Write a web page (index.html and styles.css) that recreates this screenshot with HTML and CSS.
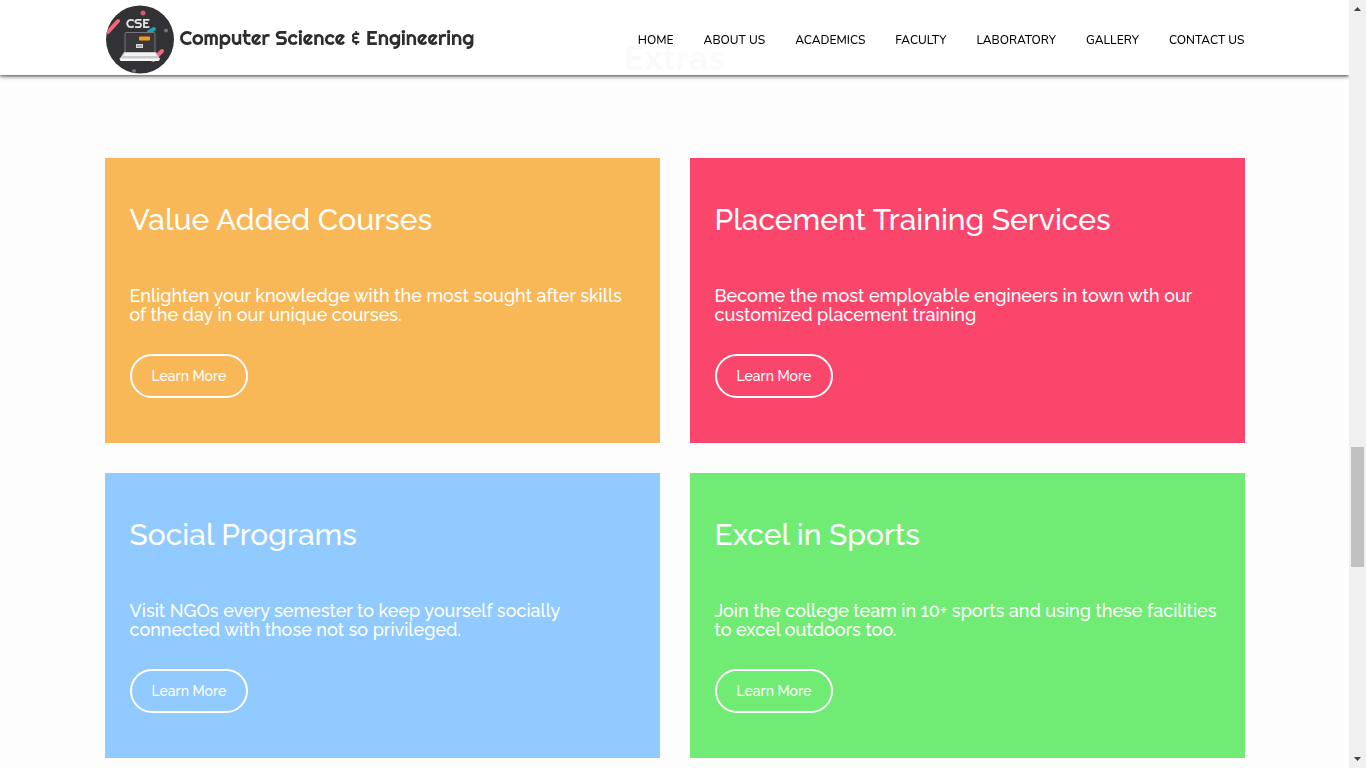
FILE: index.html
```html
<!DOCTYPE html>
<html lang="en">
<head>
<meta charset="utf-8">
<meta name="viewport" content="width=device-width, initial-scale=1">
<title>Computer Science &amp; Engineering</title>
<link rel="stylesheet" href="styles.css">
</head>
<body>
<header class="site-header">
  <div class="container header-row">
    <a class="brand" href="#">
      <svg class="logo" viewBox="0 0 69 69" aria-hidden="true">
        <defs><clipPath id="disc"><circle cx="35" cy="34.500" r="34"/></clipPath></defs>
        <g clip-path="url(#disc)">
          <rect width="69" height="69" fill="#313136"/>
          <path d="M3 27 L13 16" stroke="#f4667c" stroke-width="4" stroke-linecap="round"/>
          <path d="M48 55 L57 46" stroke="#f4667c" stroke-width="4" stroke-linecap="round"/>
          <circle cx="38" cy="8" r="2.500" fill="#d5596c"/>
          <circle cx="61" cy="25.500" r="2" fill="#74747a"/>
          <circle cx="29" cy="66" r="2" fill="#74747a"/>
          <path d="M44 27 L49 24" stroke="#18a5c4" stroke-width="4" stroke-linecap="round"/>
          <rect x="20" y="27.500" width="30" height="20" rx="1" fill="#38383b" stroke="#77777b"/>
          <rect x="34" y="31.500" width="11" height="4" rx="1" fill="#f39b16"/>
          <rect x="31.500" y="39.500" width="6" height="3" fill="#a4a8aa" stroke="#d5d8d9"/>
          <path d="M19 47 H51 L55 54 H14.500 Z" fill="#c9cacc"/>
          <path d="M20 48 H50 L52 51 H18 Z" fill="#f3f3f3"/>
          <path d="M14.500 53.500 H55 L54 56 H15.500 Z" fill="#f8f8f8"/>
        </g>
        <text class="logo-text" x="21" y="23">CSE</text>
      </svg>
      <span class="brand-name">Computer Science &amp; Engineering</span>
    </a>
    <nav class="nav" aria-label="Main">
      <a href="#">HOME</a>
      <a href="#">ABOUT US</a>
      <a href="#">ACADEMICS</a>
      <a href="#">FACULTY</a>
      <a href="#">LABORATORY</a>
      <a href="#">GALLERY</a>
      <a href="#">CONTACT US</a>
    </nav>
  </div>
</header>
<main class="container extras">
  <h2 class="section-title">Extras</h2>
  <div class="cards">
    <section class="card orange">
      <h3>Value Added Courses</h3>
      <p>Enlighten your knowledge with the most sought after skills of the day in our unique courses.</p>
      <a class="more" href="#">Learn More</a>
    </section>
    <section class="card red">
      <h3>Placement Training Services</h3>
      <p>Become the most employable engineers in town wth our customized placement training</p>
      <a class="more" href="#">Learn More</a>
    </section>
    <section class="card blue">
      <h3>Social Programs</h3>
      <p>Visit NGOs every semester to keep yourself socially connected with those not so privileged.</p>
      <a class="more" href="#">Learn More</a>
    </section>
    <section class="card green">
      <h3>Excel in Sports</h3>
      <p>Join the college team in 10+ sports and using these facilities to excel outdoors too.</p>
      <a class="more" href="#">Learn More</a>
    </section>
  </div>
</main>
<div class="scrollbar" aria-hidden="true">
  <svg class="arrow" viewBox="0 0 17 17"><path d="M5 11 L8.500 7 L12 11 Z"/></svg>
  <div class="track"><div class="thumb"></div></div>
  <svg class="arrow" viewBox="0 0 17 17"><path d="M5 6 L8.500 10 L12 6 Z"/></svg>
</div>
</body>
</html>
```
FILE: styles.css
```css
* { box-sizing: border-box; }
body {
  margin: 0;
  padding-right: 17px;
  background: #fdfdfd;
  font-family: Raleway, Lato, sans-serif;
}
a { color: inherit; text-decoration: none; }
.container {
  width: 100%;
  max-width: 1170px;
  margin: 0 auto;
  padding: 0 15px;
}
.site-header {
  position: fixed;
  z-index: 2;
  top: 0;
  left: 0;
  right: 17px;
  background: rgba(255, 255, 255, 0.98);
  box-shadow: 0 1px 4px rgba(0, 0, 0, 0.8);
}
.header-row {
  display: flex;
  align-items: center;
  justify-content: space-between;
  min-height: 75px;
}
.brand {
  display: flex;
  align-items: center;
  gap: 6px;
  padding-top: 4px;
  color: #2d2d2f;
}
.logo { width: 69px; height: 69px; }
.logo-text {
  font: 400 13px Righteous, Lato, sans-serif;
  fill: #e4e4e4;
}
.brand-name {
  padding-bottom: 4px;
  font: 400 20px/24px Righteous, Lato, sans-serif;
  white-space: nowrap;
}
.nav {
  display: flex;
  gap: 30px;
  padding-top: 4px;
  font: 500 12px/18px Nunito, Lato, sans-serif;
  color: #000;
  white-space: nowrap;
}
.extras { padding-top: 36px; }
.section-title {
  margin: 0 0 78px;
  font-size: 34px;
  line-height: 44px;
  font-weight: 700;
  text-align: center;
  color: #222;
}
.cards {
  display: grid;
  grid-template-columns: repeat(auto-fit, minmax(min(100%, 480px), 1fr));
  gap: 30px;
}
.card {
  display: flex;
  flex-direction: column;
  align-items: flex-start;
  padding: 45px 25px;
  color: #fff;
}
.card h3 {
  margin: 0 0 50px;
  font-size: 30px;
  line-height: 33px;
  font-weight: 500;
}
.card p {
  margin: 0 0 30px;
  font-size: 18px;
  line-height: 19px;
  font-weight: 500;
}
.more {
  padding: 10px 20px;
  border: 2px solid #fff;
  border-radius: 22px;
  font-size: 14px;
  line-height: 20px;
  font-weight: 500;
}
.orange { background: #f8b858; }
.red { background: #fb466c; }
.blue { background: #90caff; }
.green { background: #70ec74; }
.scrollbar {
  position: fixed;
  z-index: 3;
  top: 0;
  right: 0;
  bottom: 0;
  width: 17px;
  display: flex;
  flex-direction: column;
  background: #f0f0f0;
}
.arrow { width: 17px; height: 17px; fill: #444; }
.track { flex: 1; padding: 430px 2px 0; }
.thumb { height: 120px; background: #c1c1c1; }
```
